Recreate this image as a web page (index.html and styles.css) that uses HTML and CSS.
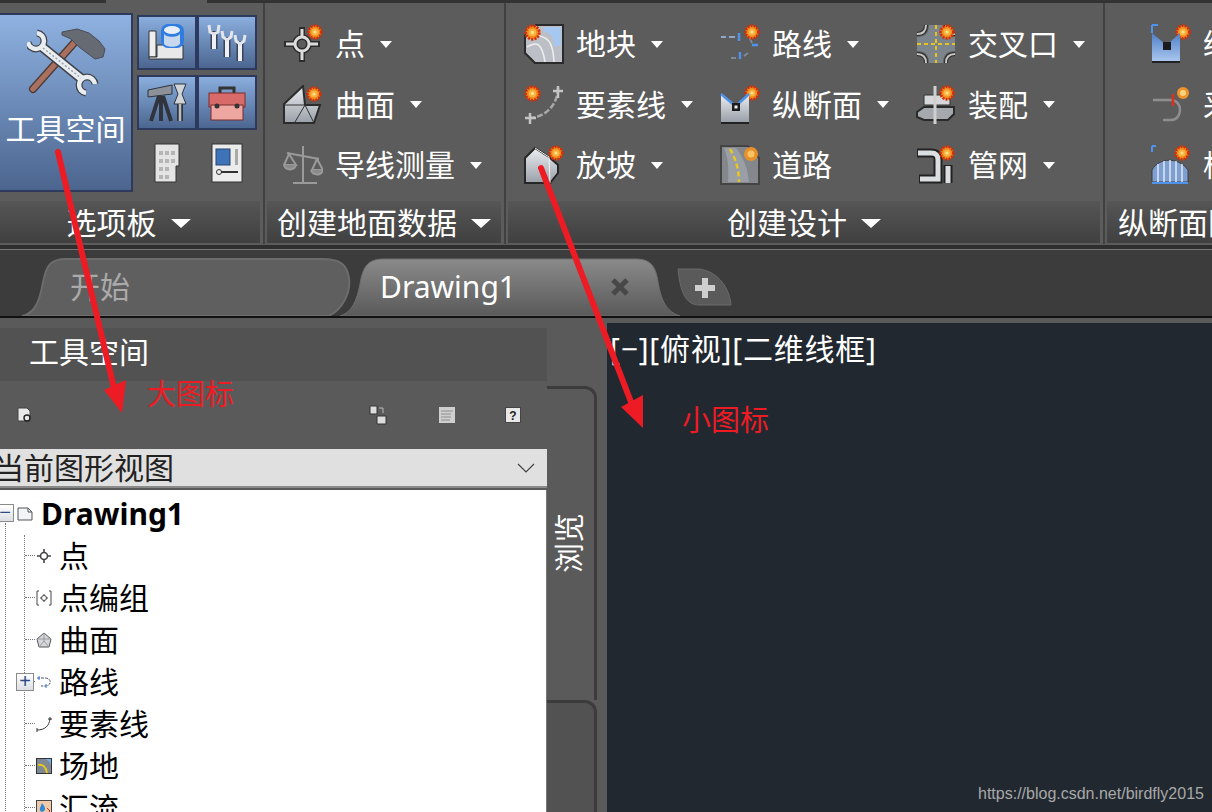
FILE: index.html
```html
<!DOCTYPE html>
<html lang="zh-CN">
<head>
  <meta charset="UTF-8">
  <title>工具空间</title>
  <link rel="stylesheet" href="styles.css">
</head>
<body>
  <svg class="sprite" aria-hidden="true">
    <defs>
      <linearGradient id="grayFill" x1="0" y1="0" x2="0" y2="1">
        <stop offset="0" stop-color="#eceff3"/>
        <stop offset="1" stop-color="#9aa0a8"/>
      </linearGradient>
      <linearGradient id="blueFill" x1="0" y1="0" x2="0" y2="1">
        <stop offset="0" stop-color="#4f7fc8"/>
        <stop offset="1" stop-color="#a9c6ee"/>
      </linearGradient>
    </defs>
    <symbol id="burst" viewBox="0 0 16 16">
      <circle cx="8" cy="8" r="6.4" fill="#f08a1e" stroke="#d32f0a" stroke-width="2.6" stroke-dasharray="2 1.1"/>
      <circle cx="8" cy="8" r="3.6" fill="#f7b23f"/>
      <circle cx="8" cy="8" r="1.6" fill="#fbe08a"/>
    </symbol>
  </svg>

  <div class="ribbon">
    <span class="ribbon-notch"></span>
    <section class="panel panel-tools">
      <div class="panel-body tools-body">
        <button class="big-btn">
          <svg class="big-icon" viewBox="0 0 80 70">
            <path d="M6 62L47 16" stroke="#4a3a36" stroke-width="8" stroke-linecap="round"/>
            <path d="M6 62L47 16" stroke="#a96f5f" stroke-width="5.5" stroke-linecap="round"/>
            <path d="M35 5L50 2L62 6L72 14L78 22L76 30L68 32L60 26L52 20L44 12L35 8Z" fill="#666a72" stroke="#4a4d55"/>
            <g fill="none" stroke="#3f4349">
              <path d="M14 19L56 53" stroke-width="10"/>
              <path d="M1 15A8 8 0 1 0 10 6" stroke-width="7"/>
              <path d="M68 57A8 8 0 1 0 59 66" stroke-width="7"/>
            </g>
            <g fill="none" stroke="#e9edf0">
              <path d="M14 19L56 53" stroke-width="7"/>
              <path d="M1 15A8 8 0 1 0 10 6" stroke-width="4.5"/>
              <path d="M68 57A8 8 0 1 0 59 66" stroke-width="4.5"/>
            </g>
            <path d="M16 21L54 51" stroke="#9aa3ad" stroke-width="1.5" stroke-dasharray="2 2"/>
          </svg>
          <span>工具空间</span>
        </button>
        <div class="tool-grid">
          <button class="tool-btn">
            <svg class="tool-icon" viewBox="0 0 40 40">
              <path d="M2 8h7v26H2z" fill="#eee" stroke="#333"/>
              <path d="M10 22h26v14H2v-2h8z" fill="#e8e8e8" stroke="#333"/>
              <rect x="14" y="1" width="23" height="24" rx="7" fill="#2f7de0"/>
              <ellipse cx="25" cy="7" rx="8" ry="4" fill="#e8eef8"/>
              <path d="M17 10v10c0 5 16 5 16 0V10c0 5-16 5-16 0z" fill="#c8d8ee"/>
            </svg>
          </button>
          <button class="tool-btn">
            <svg class="tool-icon" viewBox="0 0 40 40" fill="none" stroke="#3b4356">
              <g stroke-width="7"><path d="M7 8v18M20 14v20M33 18v20"/></g>
              <g stroke="#eef0f3" stroke-width="4"><path d="M7 10v16M20 16v18M33 20v18"/></g>
              <g stroke="#e2e5ea" stroke-width="3"><path d="M2 2l1 7 4 2 4-2 1-7M15 8l1 6 4 3 4-3 1-6M28 12l1 6 4 3 4-3 1-6"/></g>
            </svg>
          </button>
          <button class="tool-btn">
            <svg class="tool-icon" viewBox="0 0 40 40" fill="none" stroke="#2f343d">
              <path d="M1 7l24-5v9L1 14z" fill="#8d929a" stroke="#2f343d"/>
              <path d="M12 13L4 38M14 13v25M16 13l8 25" stroke-width="4"/>
              <path d="M27 1h12l-4 10 4 10H27l4-10z" fill="#d0d3d8" stroke="#2f343d"/>
              <path d="M33 21v17" stroke="#2f343d" stroke-width="6"/>
              <path d="M33 21v17" stroke="#b9bdc3" stroke-width="2.5"/>
            </svg>
          </button>
          <button class="tool-btn">
            <svg class="tool-icon" viewBox="0 0 40 40">
              <path d="M13 10V5h14v5" fill="none" stroke="#333" stroke-width="3"/>
              <rect x="2" y="10" width="36" height="14" fill="#d96a6a" stroke="#7a2c2c"/>
              <rect x="4" y="22" width="32" height="15" fill="#eda6a0" stroke="#7a2c2c"/>
              <circle cx="10" cy="23" r="2.5" fill="#333"/>
              <circle cx="30" cy="23" r="2.5" fill="#333"/>
            </svg>
          </button>
          <div class="tool-plain">
            <svg class="plain-a" viewBox="0 0 26 40">
              <path d="M1 1h24v22h-3v16H1z" fill="#e4e4e4" stroke="#333"/>
              <path d="M5 8h4v4H5zM11 8h4v4h-4zM17 8h4v4h-4zM5 16h4v4H5zM11 16h4v4h-4zM17 16h4v4h-4zM5 24h4v4H5zM11 24h4v4h-4zM5 32h4v4H5zM11 32h4v4h-4z" fill="#b5b5b5"/>
            </svg>
          </div>
          <div class="tool-plain">
            <svg class="plain-b" viewBox="0 0 32 40">
              <rect x="1" y="1" width="30" height="38" fill="#ececec" stroke="#333"/>
              <rect x="5" y="6" width="14" height="16" fill="#3f73b8" stroke="#26456f"/>
              <path d="M24 6h3v16h-3z" fill="#aaa"/>
              <path d="M10 29h17" stroke="#333" stroke-width="2"/>
              <circle cx="8" cy="29" r="2.5" fill="none" stroke="#333"/>
            </svg>
          </div>
        </div>
      </div>
      <div class="panel-label">选项板<i class="caret caret-lg"></i></div>
    </section>

    <section class="panel panel-ground">
      <div class="panel-body item-list">
        <div class="item">
          <svg class="item-icon" viewBox="0 0 40 40" fill="none">
            <g stroke="#2c2c2c" stroke-width="6"><circle cx="19" cy="20" r="7"/><path d="M1 20h11M26 20h11M19 3v10M19 27v11"/></g>
            <g stroke="#dcdcdc" stroke-width="3"><circle cx="19" cy="20" r="7"/><path d="M3 20h9M26 20h9M19 5v8M19 27v9"/></g>
            <use href="#burst" x="24" y="0" width="16" height="16"/>
          </svg>
          <span>点</span><i class="caret"></i>
        </div>
        <div class="item">
          <svg class="item-icon" viewBox="0 0 40 40">
            <path d="M1 38V19L20 1l2 19h15l-6 18z" fill="url(#grayFill)" stroke="#2c2c2c" stroke-width="2"/>
            <path d="M2 20h20l9 18M22 20L12 37" stroke="#333" fill="none"/>
            <use href="#burst" x="23" y="1" width="16" height="16"/>
          </svg>
          <span>曲面</span><i class="caret"></i>
        </div>
        <div class="item">
          <svg class="item-icon" viewBox="0 0 40 40" fill="none" stroke="#9a9a9a" stroke-width="2">
            <path d="M20 1v36M10 38h24M4 8l32 6"/>
            <path d="M6 9L1 20h12zM34 14l-5 11h11z"/>
            <path d="M1 20c2 6 10 6 12 0M28 25c2 6 10 6 12 0" fill="#8a8a8a"/>
          </svg>
          <span>导线测量</span><i class="caret"></i>
        </div>
      </div>
      <div class="panel-label">创建地面数据<i class="caret caret-lg"></i></div>
    </section>

    <section class="panel panel-design">
      <div class="panel-body item-grid">
        <div class="item">
          <svg class="item-icon" viewBox="0 0 40 40">
            <path d="M1 12L12 1h27v38H11L1 29z" fill="#bcc0c6" stroke="#2a2a2a" stroke-width="2"/>
            <path d="M20 3h17v19h-7c0-9-4-14-10-14z" fill="#a6c8f0"/>
            <path d="M3 23c10-6 15-4 18 15M12 12c12 0 17 6 18 26" fill="none" stroke="#eee" stroke-width="1.5"/>
            <use href="#burst" x="0" y="0" width="17" height="17"/>
          </svg>
          <span>地块</span><i class="caret"></i>
        </div>
        <div class="item">
          <svg class="item-icon" viewBox="0 0 40 40" fill="none">
            <path d="M1 13h5M9 13h6" stroke="#8fa6c6" stroke-width="2"/>
            <path d="M19 9v8M32 21h6M20 35v-7" stroke="#4f94ec" stroke-width="2.4"/>
            <path d="M28 12c3 3 3 5 4 7M11 34h5M28 29l-4 3" stroke="#7d8a99" stroke-width="2"/>
            <use href="#burst" x="24" y="0" width="16" height="16"/>
          </svg>
          <span>路线</span><i class="caret"></i>
        </div>
        <div class="item">
          <svg class="item-icon" viewBox="0 0 40 40">
            <path d="M13 1h14c0 8 4 12 12 12v14c-8 0-12 4-12 12H13c0-8-4-12-12-12V13c8 0 12-4 12-12z" fill="#7c848c"/>
            <g fill="none" stroke="#2c2c2c" stroke-width="4"><path d="M1 10c6 0 9-3 9-9M30 1c0 6 3 9 9 9M1 30c6 0 9 3 9 9M39 30c-6 0-9 3-9 9"/></g>
            <g fill="none" stroke="#c6c6c6" stroke-width="2"><path d="M1 10c6 0 9-3 9-9M30 1c0 6 3 9 9 9M1 30c6 0 9 3 9 9M39 30c-6 0-9 3-9 9"/></g>
            <path d="M20 1v38M1 20h38" stroke="#e9c21c" stroke-width="2" stroke-dasharray="4 3"/>
            <use href="#burst" x="23" y="0" width="16" height="16"/>
          </svg>
          <span>交叉口</span><i class="caret"></i>
        </div>

        <div class="item">
          <svg class="item-icon" viewBox="0 0 40 40" fill="none">
            <path d="M34 3c0 16-12 29-28 30" stroke="#a8a8a8" stroke-width="2.5" stroke-dasharray="6 2"/>
            <path d="M34 1v12M29 6h10M6 28v11M1 33h11" stroke="#c4c4c4" stroke-width="2.5"/>
            <use href="#burst" x="0" y="0" width="17" height="17"/>
          </svg>
          <span>要素线</span><i class="caret"></i>
        </div>
        <div class="item">
          <svg class="item-icon" viewBox="0 0 40 40">
            <use href="#burst" x="24" y="0" width="16" height="16"/>
            <path d="M1 9l13 11h3l12-11v28H1z" fill="url(#grayFill)"/>
            <path d="M1 9l13 11M29 9L17 20" stroke="#4f94ec" stroke-width="2.5"/>
            <rect x="12" y="18" width="8" height="8" fill="#1c1c1c"/>
            <rect x="14.5" y="20.5" width="3" height="3" fill="#eee"/>
            <path d="M1 38h28" stroke="#222" stroke-width="2"/>
          </svg>
          <span>纵断面</span><i class="caret"></i>
        </div>
        <div class="item">
          <svg class="item-icon" viewBox="0 0 40 40">
            <path d="M8 10h26v10H8z" fill="#d5d7da" stroke="#333"/>
            <path d="M1 27l7-5h30v7l-6 6H8l-7-3z" fill="#a5a8ac" stroke="#2a2a2a" stroke-width="2"/>
            <path d="M19 1v38" stroke="#cfcfcf" stroke-width="3"/>
            <use href="#burst" x="23" y="0" width="16" height="16"/>
          </svg>
          <span>装配</span><i class="caret"></i>
        </div>

        <div class="item">
          <svg class="item-icon" viewBox="0 0 40 40">
            <path d="M1 13L11 3L25 12L34 20V28L26 38H1Z" fill="url(#grayFill)" stroke="#262626" stroke-width="2"/>
            <path d="M11 3L25 12L26 38" fill="none" stroke="#f2f2f2"/>
            <use href="#burst" x="24" y="0" width="16" height="16"/>
          </svg>
          <span>放坡</span><i class="caret"></i>
        </div>
        <div class="item">
          <svg class="item-icon" viewBox="0 0 40 40" fill="none">
            <path d="M28 1H1v38h38V13z" fill="#84888d" stroke="#444" stroke-width="2"/>
            <path d="M4 3h12c8 10 12 22 13 34H8C9 24 8 12 4 3z" fill="#9a9ea5"/>
            <path d="M10 4c6 10 9 22 9 33" stroke="#e8c71e" stroke-width="2.5" stroke-dasharray="5 3"/>
            <circle cx="31" cy="9" r="7" fill="#e8902a"/>
            <circle cx="31" cy="9" r="3.5" fill="#fac567"/>
          </svg>
          <span>道路</span>
        </div>
        <div class="item">
          <svg class="item-icon" viewBox="0 0 40 40" fill="none">
            <g stroke="#222" stroke-width="9"><path d="M1 8h14c5 0 7 2 7 7v19H3M32 20v18"/></g>
            <g stroke="#dcdfe2" stroke-width="5"><path d="M2 8h13c5 0 7 2 7 7v19H4M32 21v17"/></g>
            <use href="#burst" x="23" y="0" width="16" height="16"/>
          </svg>
          <span>管网</span><i class="caret"></i>
        </div>
      </div>
      <div class="panel-label">创建设计<i class="caret caret-lg"></i></div>
    </section>

    <section class="panel panel-profile">
      <div class="panel-body item-list">
        <div class="item">
          <svg class="item-icon" viewBox="0 0 40 40">
            <use href="#burst" x="24" y="0" width="16" height="16"/>
            <path d="M1 9l13 11h3l12-11v28H1z" fill="url(#blueFill)"/>
            <path d="M1 1h6M1 1v8" stroke="#4f94ec" stroke-width="2"/>
            <rect x="12" y="18" width="8" height="8" fill="#1c1c1c"/>
            <path d="M1 38h28" stroke="#222" stroke-width="2"/>
          </svg>
          <span>纵断面</span>
        </div>
        <div class="item">
          <svg class="item-icon" viewBox="0 0 40 40" fill="none">
            <path d="M2 15h18c12 0 12 20 0 20h-8" stroke="#8e8e8e" stroke-width="2.5"/>
            <path d="M22 9v12" stroke="#d8321e" stroke-width="2.5"/>
            <circle cx="32" cy="8" r="6" fill="#ec932b"/>
            <circle cx="32" cy="8" r="3" fill="#fad27f"/>
          </svg>
          <span>采样线</span>
        </div>
        <div class="item">
          <svg class="item-icon" viewBox="0 0 40 40">
            <path d="M1 37V25C8 12 28 12 37 25v12z" fill="#7e9fd0" stroke="#3e3e3e"/>
            <path d="M7 19v18M13 16v21M19 15v22M25 16v21M31 19v18" stroke="#dde7f5" stroke-width="1.5"/>
            <path d="M1 38h36M1 1h4M1 1v6" stroke="#4f94ec" stroke-width="2"/>
            <use href="#burst" x="23" y="0" width="16" height="16"/>
          </svg>
          <span>横断面</span>
        </div>
      </div>
      <div class="panel-label panel-label-left">纵断面图形</div>
    </section>
  </div>

  <div class="tabs">
    <div class="tab tab-start">
      <svg class="tab-shape" viewBox="0 0 333 57" preserveAspectRatio="none">
        <path d="M0 57C14 54 18 40 21 24C24 8 28 1 44 1H300C318 1 325 6 327 20C329 34 320 52 306 57Z" fill="#5f5f5f" stroke="#6c6c6c" stroke-width="2"/>
      </svg>
      <span class="tab-text">开始</span>
    </div>
    <div class="tab tab-active">
      <svg class="tab-shape" viewBox="0 0 340 58" preserveAspectRatio="none">
        <defs>
          <linearGradient id="tabFill" x1="0" y1="0" x2="0" y2="1">
            <stop offset="0" stop-color="#8a8a8a"/>
            <stop offset="1" stop-color="#5a5a5a"/>
          </linearGradient>
        </defs>
        <path d="M0 58C12 55 17 42 20 26C23 8 28 1 44 1H296C310 1 316 8 318 24C321 42 326 54 340 58Z" fill="url(#tabFill)" stroke="#6e6e6e"/>
      </svg>
      <span class="tab-text">Drawing1</span>
      <svg class="tab-close" viewBox="0 0 20 20">
        <path d="M3 3L17 17M17 3L3 17" stroke="#484848" stroke-width="5"/>
      </svg>
    </div>
    <div class="tab-add">
      <svg class="tab-shape" viewBox="0 0 55 38" preserveAspectRatio="none">
        <path d="M1 1H22C38 3 52 16 54 37H22C8 37 3 22 1 1Z" fill="#5a5a5a" stroke="#6a6a6a"/>
        <path d="M28 10V30M18 20H38" stroke="#cfcfcf" stroke-width="6"/>
      </svg>
    </div>
  </div>

  <div class="workspace">
    <div class="palette">
      <div class="palette-main">
        <div class="palette-title">工具空间</div>
        <div class="palette-toolbar">
          <svg class="tb-icon tb-first" viewBox="0 0 16 16">
            <path d="M1 1h9l3 3v10H1z" fill="#e8e8e8" stroke="#444"/>
            <circle cx="10" cy="11" r="3" fill="none" stroke="#222" stroke-width="1.4"/>
          </svg>
          <svg class="tb-icon tb-second" viewBox="0 0 18 20">
            <path d="M1 1h7v8H1z" fill="#ddd" stroke="#333"/>
            <path d="M8 11h9v8H8z" fill="#ddd" stroke="#333"/>
            <path d="M10 3h4v5" stroke="#bbb" fill="none"/>
          </svg>
          <svg class="tb-icon tb-third" viewBox="0 0 16 16">
            <rect width="16" height="16" fill="#cfcfcf"/>
            <path d="M2 4h12M2 7h10M2 10h10M2 13h9" stroke="#8e8e8e"/>
          </svg>
          <span class="tb-help">?</span>
        </div>
        <div class="combo">
          <span class="combo-text">当前图形视图</span>
          <svg class="combo-arrow" viewBox="0 0 18 10">
            <path d="M1 1L9 9L17 1" fill="none" stroke="#444" stroke-width="1.2"/>
          </svg>
        </div>
        <div class="tree">
          <div class="tree-root">
            <span class="tree-box tree-box-root">−</span>
            <svg class="tree-icon" viewBox="0 0 16 16">
              <path d="M1 2h10l4 4v8H1z" fill="#f2f4f7" stroke="#555"/>
              <path d="M11 2v4h4" fill="none" stroke="#555"/>
            </svg>
            <b>Drawing1</b>
          </div>
          <ul class="tree-children">
            <li>
              <svg class="tree-icon" viewBox="0 0 16 16" fill="none" stroke="#444">
                <circle cx="8" cy="8" r="3.5" stroke-width="1.6"/><path d="M1 8h3M12 8h3M8 1v3M8 12v3" stroke-width="1.6"/>
              </svg>点
            </li>
            <li>
              <svg class="tree-icon" viewBox="0 0 16 16" fill="none" stroke="#444">
                <path d="M3 1H1v14h2M13 1h2v14h-2"/><circle cx="8" cy="8" r="2.5"/><path d="M4 8h1.5M10.5 8H12M8 4v1.5M8 10.5V12"/>
              </svg>点编组
            </li>
            <li>
              <svg class="tree-icon" viewBox="0 0 16 16">
                <path d="M8 1l7 6-2 8H3L1 7z" fill="#d5d8dd" stroke="#555"/>
                <path d="M1 7h14M8 1v8l-5 6M8 9l5 6" stroke="#999" fill="none"/>
              </svg>曲面
            </li>
            <li>
              <span class="tree-box tree-box-plus">+</span>
              <svg class="tree-icon" viewBox="0 0 16 16" fill="none">
                <path d="M1 4h8c7 0 7 8 0 8H5" stroke="#556" stroke-dasharray="3 1"/>
                <path d="M3 2v4M10 10v4" stroke="#2d7de0"/>
              </svg>路线
            </li>
            <li>
              <svg class="tree-icon" viewBox="0 0 16 16" fill="none" stroke="#333">
                <path d="M1 14c8 0 12-4 13-11M1 12v4M12 3h4M14 1v3"/>
              </svg>要素线
            </li>
            <li>
              <svg class="tree-icon" viewBox="0 0 16 16">
                <rect x="0.5" y="0.5" width="15" height="15" fill="#7f8893" stroke="#333"/>
                <path d="M9 1h6v6c-1-3-3-5-6-6z" fill="#6fb1ea"/>
                <path d="M2 7c5-1 8 2 9 8" fill="none" stroke="#e8c71e" stroke-width="2"/>
              </svg>场地
            </li>
            <li>
              <svg class="tree-icon" viewBox="0 0 16 16">
                <rect x="0.5" y="0.5" width="15" height="15" fill="#f0c9a8" stroke="#444"/>
                <path d="M6 3c3 4 4 6 2 8s-5 0-4-3z" fill="#2d88d8"/>
                <path d="M11 8l3 3-4 4" stroke="#d62a1e" fill="none"/>
              </svg>汇流
            </li>
          </ul>
        </div>
      </div>
      <div class="side-tabs">
        <div class="side-tab side-tab-first"><span>浏览</span></div>
        <div class="side-tab side-tab-second"></div>
      </div>
    </div>
    <div class="viewport">[−][俯视][二维线框]</div>
  </div>

  <!-- 标注 -->
  <svg class="notes" viewBox="0 0 1212 812" aria-hidden="true">
    <path d="M58 152L114 388" stroke="#ed1c24" stroke-width="6" stroke-linecap="round"/>
    <path d="M104 390L126 380L122 413Z" fill="#ed1c24"/>
    <path d="M541 168L631 402" stroke="#ed1c24" stroke-width="6" stroke-linecap="round"/>
    <path d="M621 407L643 395L643 428Z" fill="#ed1c24"/>
  </svg>
  <span class="note note-large">大图标</span>
  <span class="note note-small">小图标</span>
  <span class="watermark">https://blog.csdn.net/birdfly2015</span>
</body>
</html>
```

FILE: styles.css
```css
:root {
  --ribbon-bg: #5c5c5c;
  --dark-line: #3c3c3c;
  --panel-bg: #5a5a5a;
  --note-red: #ed1c24;
}

* {
  box-sizing: border-box;
  margin: 0;
  padding: 0;
}

html, body {
  width: 1212px;
  height: 812px;
  overflow: hidden;
}

body {
  position: relative;
  display: flex;
  flex-direction: column;
  font-family: "Noto Sans", "Noto Sans CJK SC", sans-serif;
  font-size: 30px;
  line-height: 1.2;
  color: #fff;
  background-color: var(--panel-bg);
}

.sprite {
  position: absolute;
  width: 0;
  height: 0;
}

button {
  font: inherit;
  color: inherit;
}

/* ribbon */
.ribbon {
  position: relative;
  display: flex;
  flex: none;
  height: 250px;
  padding-bottom: 5px;
  border-top: 3px solid #333;
  border-bottom: 1px solid #777;
  background: linear-gradient(#5c5c5c 242px, #2e2e2e 242px);
}

.ribbon-notch {
  position: absolute;
  top: -3px;
  left: 106px;
  width: 101px;
  height: 3px;
  background-color: var(--ribbon-bg);
}

.panel {
  display: flex;
  flex-direction: column;
  flex: none;
  border-right: 2px solid #414141;
}

.panel-tools { width: 265px; }
.panel-ground { width: 241px; }
.panel-design { width: 599px; }
.panel-profile { flex: 1; border-right: none; }

.panel-body {
  flex: none;
  height: 198px;
}

.panel-label {
  display: flex;
  align-items: center;
  justify-content: center;
  height: 42px;
  margin: 0 3px 0 0;
  padding-top: 2px;
  background: linear-gradient(#565656, #404040);
  white-space: nowrap;
  overflow: hidden;
}

.panel-tools .panel-label {
  padding-right: 3px;
}

.panel-ground .panel-label,
.panel-design .panel-label {
  margin-left: 2px;
}

.panel-label-left {
  justify-content: flex-start;
  margin: 0 0 0 2px;
  padding-left: 11px;
}

.caret {
  flex: none;
  width: 0;
  height: 0;
  margin-left: 14px;
  border-left: 6px solid transparent;
  border-right: 6px solid transparent;
  border-top: 7px solid #fff;
}

.caret-lg {
  border-left-width: 10px;
  border-right-width: 10px;
  border-top-width: 9px;
}

/* tool buttons */
.tools-body {
  display: flex;
  gap: 4px;
  padding-top: 10px;
}

.big-btn {
  display: flex;
  flex-direction: column;
  align-items: center;
  width: 133px;
  height: 179px;
  border: 2px solid #2d3a5e;
  border-left: none;
  background: linear-gradient(#8fb2e2, #4b658e);
}

.big-icon {
  width: 80px;
  height: 70px;
  margin-top: 12px;
  margin-right: -2px;
}

.big-btn span {
  margin-top: 14px;
  white-space: nowrap;
}

.tool-grid {
  display: grid;
  grid-template-columns: 60px 60px;
  grid-auto-rows: 55px;
  row-gap: 5px;
  margin-top: 2px;
}

.tool-btn {
  display: flex;
  align-items: center;
  justify-content: center;
  border: 2px solid #2d3a5e;
  background: linear-gradient(#8aaede, #4b6690);
}

.tool-icon {
  width: 40px;
  height: 40px;
}

.tool-plain {
  display: flex;
  align-items: center;
  justify-content: center;
}

.plain-a { width: 26px; height: 40px; }
.plain-b { width: 32px; height: 40px; }

/* items */
.item-list,
.item-grid {
  display: grid;
  grid-auto-rows: 60.5px;
  align-content: start;
  padding-top: 11px;
}

.panel-ground .item-list { padding-left: 18px; }
.panel-profile .item-list { padding-left: 46px; }

.item-grid {
  grid-template-columns: repeat(3, 196px);
  padding-left: 18px;
}

.item {
  display: flex;
  align-items: center;
  white-space: nowrap;
}

.item-icon {
  flex: none;
  width: 40px;
  height: 40px;
  margin-right: 12px;
}

.item .caret {
  margin-left: 15px;
}

/* tabs */
.tabs {
  display: flex;
  flex: none;
  height: 68px;
  padding: 8px 0 0 22px;
  border-bottom: 2px solid #111;
  background-color: var(--dark-line);
}

.tab {
  position: relative;
  display: flex;
  align-items: center;
  flex: none;
  height: 58px;
}

.tab-shape {
  position: absolute;
  top: 0;
  left: 0;
  width: 100%;
  height: 100%;
}

.tab-text {
  position: relative;
}

.tab-start {
  width: 333px;
  padding-left: 48px;
  color: #aaa;
}

.tab-active {
  width: 340px;
  margin-left: -15px;
  padding-left: 40px;
}

.tab-close {
  position: absolute;
  top: 19px;
  left: 270px;
  width: 20px;
  height: 20px;
}

.tab-add {
  position: relative;
  flex: none;
  width: 55px;
  height: 38px;
  margin: 10px 0 0 -3px;
}

/* workspace */
.workspace {
  display: flex;
  flex: 1;
  min-height: 0;
}

.palette {
  display: flex;
  flex: none;
  width: 597px;
  padding-top: 10px;
}

.palette-main {
  display: flex;
  flex-direction: column;
  flex: none;
  width: 547px;
}

.palette-title {
  flex: none;
  height: 53px;
  padding: 6px 0 0 29px;
  background-color: #525252;
}

.palette-toolbar {
  display: flex;
  align-items: center;
  flex: none;
  height: 68px;
  padding: 0 26px 0 17px;
}

.tb-icon {
  flex: none;
  width: 16px;
  height: 16px;
}

.tb-first { margin-right: auto; }
.tb-second { width: 18px; height: 20px; margin-right: 52px; }
.tb-third { margin-right: 50px; }

.tb-help {
  flex: none;
  width: 16px;
  height: 16px;
  font-family: "Liberation Sans", sans-serif;
  font-size: 12px;
  font-weight: bold;
  line-height: 16px;
  text-align: center;
  color: #222;
  background-color: #e8e8e8;
  border: 1px solid #444;
}

.combo {
  display: flex;
  align-items: center;
  justify-content: space-between;
  flex: none;
  height: 39px;
  padding-right: 12px;
  color: #222;
  background-color: #e0e0e0;
  border-bottom: 2px solid #8a8a8a;
  overflow: hidden;
}

.combo-text {
  margin-left: -6px;
  white-space: nowrap;
}

.combo-arrow {
  flex: none;
  width: 18px;
  height: 10px;
}

.tree {
  position: relative;
  flex: 1;
  margin-top: 2px;
  padding-top: 3px;
  color: #000;
  background-color: #fff;
  border-right: 1px solid #777;
}

.tree::before {
  content: "";
  position: absolute;
  top: 33px;
  bottom: 0;
  left: 5px;
  border-left: 1px dotted #777;
}

.tree-root {
  display: flex;
  align-items: center;
  height: 42px;
  padding-left: 17px;
}

.tree-root .tree-icon {
  margin-right: 8px;
}

.tree-children {
  margin-left: 24px;
  list-style: none;
  border-left: 1px dotted #777;
}

.tree-children li {
  position: relative;
  display: flex;
  align-items: center;
  height: 42px;
  padding-left: 11px;
}

.tree-children li::before {
  content: "";
  position: absolute;
  top: 20px;
  left: 0;
  width: 10px;
  border-top: 1px dotted #777;
}

.tree-children .tree-icon {
  margin-right: 7px;
}

.tree-icon {
  flex: none;
  width: 16px;
  height: 16px;
}

.tree-box {
  position: absolute;
  width: 18px;
  height: 18px;
  font-family: "Liberation Sans", sans-serif;
  font-size: 20px;
  font-weight: normal;
  line-height: 15px;
  text-align: center;
  color: #2c4a86;
  background: linear-gradient(#fff, #dcdee4);
  border: 1px solid #8a8a8a;
  z-index: 1;
}

.tree-box-root {
  top: 14px;
  left: -4px;
}

.tree-box-plus {
  top: 12px;
  left: -9px;
}

.side-tabs {
  display: flex;
  flex-direction: column;
  flex: none;
  width: 50px;
  padding-top: 58px;
}

.side-tab {
  border-top: 3px solid var(--dark-line);
  border-right: 3px solid var(--dark-line);
  border-radius: 0 12px 0 0;
}

.side-tab-first {
  display: flex;
  justify-content: center;
  flex: none;
  height: 314px;
  padding: 124px 3px 0 0;
}

.side-tab-first span {
  height: 60px;
  writing-mode: vertical-rl;
  text-orientation: sideways;
  transform: rotate(180deg);
}

.side-tab-second {
  flex: 1;
  background-color: #525252;
}

.viewport {
  flex: 1;
  margin: 5px 0 0 10px;
  padding: 8px 0 0 3px;
  letter-spacing: 0.8px;
  white-space: nowrap;
  background-color: #212830;
}

/* annotations */
.notes {
  position: absolute;
  top: 0;
  left: 0;
  width: 1212px;
  height: 812px;
  pointer-events: none;
}

.note {
  position: absolute;
  font-size: 29px;
  color: var(--note-red);
  white-space: nowrap;
}

.note-large { top: 377px; left: 147px; }
.note-small { top: 403px; left: 682px; }

.watermark {
  position: absolute;
  top: 784px;
  left: 978px;
  font-family: "Liberation Sans", sans-serif;
  font-size: 16px;
  color: #a8a8a8;
  white-space: nowrap;
}
```
